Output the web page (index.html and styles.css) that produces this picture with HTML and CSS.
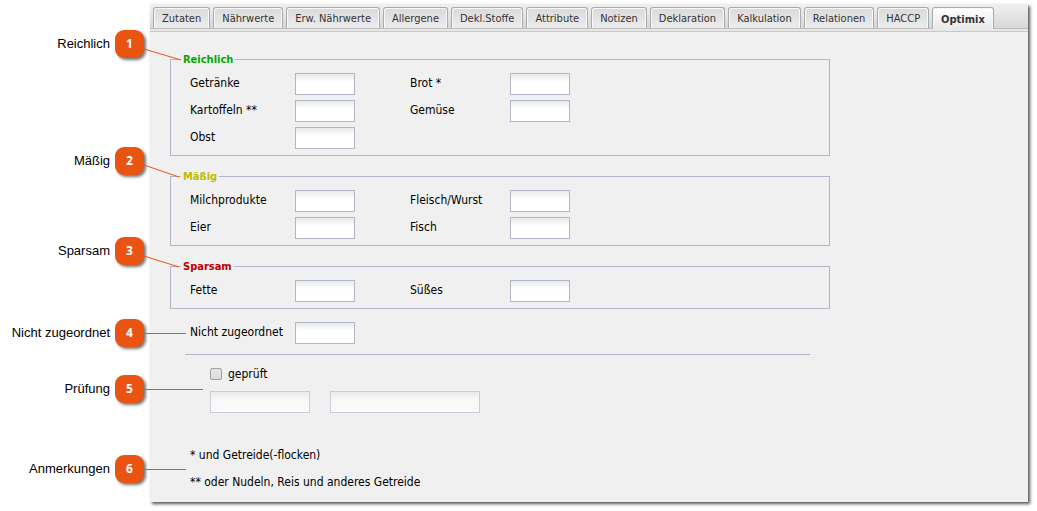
FILE: index.html
```html
<!DOCTYPE html>
<html lang="de">
<head>
<meta charset="utf-8">
<meta name="viewport" content="width=device-width, initial-scale=1">
<title>Optimix</title>
<link rel="stylesheet" href="styles.css">
</head>
<body>
<main class="panel">
  <nav class="tabs" role="tablist">
    <button class="tab" type="button" role="tab">Zutaten</button>
    <button class="tab" type="button" role="tab">Nährwerte</button>
    <button class="tab" type="button" role="tab">Erw. Nährwerte</button>
    <button class="tab" type="button" role="tab">Allergene</button>
    <button class="tab" type="button" role="tab">Dekl.Stoffe</button>
    <button class="tab" type="button" role="tab">Attribute</button>
    <button class="tab" type="button" role="tab">Notizen</button>
    <button class="tab" type="button" role="tab">Deklaration</button>
    <button class="tab" type="button" role="tab">Kalkulation</button>
    <button class="tab" type="button" role="tab">Relationen</button>
    <button class="tab" type="button" role="tab">HACCP</button>
    <button class="tab tab-active" type="button" role="tab" aria-selected="true">Optimix</button>
  </nav>
  <form class="form">
    <section class="section">
      <div class="callout callout-group"><span class="callout-text">Reichlich</span><span class="badge">1</span>
        <svg class="leader" width="60" height="40" aria-hidden="true"><path d="M0 19L37 30"/></svg></div>
      <fieldset class="group">
        <legend class="legend green">Reichlich</legend>
        <div class="fields">
          <label class="label" for="getraenke">Getränke</label><input class="field" id="getraenke" type="text">
          <label class="label" for="brot">Brot *</label><input class="field" id="brot" type="text">
          <label class="label" for="kartoffeln">Kartoffeln **</label><input class="field" id="kartoffeln" type="text">
          <label class="label" for="gemuese">Gemüse</label><input class="field" id="gemuese" type="text">
          <label class="label" for="obst">Obst</label><input class="field" id="obst" type="text">
        </div>
      </fieldset>
    </section>
    <section class="section">
      <div class="callout callout-group"><span class="callout-text">Mäßig</span><span class="badge">2</span>
        <svg class="leader" width="60" height="40" aria-hidden="true"><path d="M0 18L35 30"/></svg></div>
      <fieldset class="group">
        <legend class="legend yellow">Mäßig</legend>
        <div class="fields">
          <label class="label" for="milch">Milchprodukte</label><input class="field" id="milch" type="text">
          <label class="label" for="fleisch">Fleisch/Wurst</label><input class="field" id="fleisch" type="text">
          <label class="label" for="eier">Eier</label><input class="field" id="eier" type="text">
          <label class="label" for="fisch">Fisch</label><input class="field" id="fisch" type="text">
        </div>
      </fieldset>
    </section>
    <section class="section">
      <div class="callout callout-group"><span class="callout-text">Sparsam</span><span class="badge">3</span>
        <svg class="leader" width="60" height="40" aria-hidden="true"><path d="M0 19L35 30"/></svg></div>
      <fieldset class="group">
        <legend class="legend red">Sparsam</legend>
        <div class="fields">
          <label class="label" for="fette">Fette</label><input class="field" id="fette" type="text">
          <label class="label" for="suesses">Süßes</label><input class="field" id="suesses" type="text">
        </div>
      </fieldset>
    </section>
    <section class="section">
      <div class="callout"><span class="callout-text">Nicht zugeordnet</span><span class="badge">4</span>
        <svg class="leader" width="60" height="40" aria-hidden="true"><path d="M0 14.5H42"/></svg></div>
      <div class="fields unassigned">
        <label class="label" for="rest">Nicht zugeordnet</label><input class="field" id="rest" type="text">
      </div>
    </section>
    <hr class="rule">
    <section class="section">
      <div class="callout"><span class="callout-text">Prüfung</span><span class="badge">5</span>
        <svg class="leader" width="60" height="40" aria-hidden="true"><path d="M0 14.5H59"/></svg></div>
      <div class="check">
        <label class="check-label"><input class="checkbox" type="checkbox">geprüft</label>
        <div class="check-fields">
          <input class="field check-date" type="text" aria-label="Geprüft am" disabled>
          <input class="field check-user" type="text" aria-label="Geprüft von" disabled>
        </div>
      </div>
    </section>
    <section class="section notes">
      <div class="callout"><span class="callout-text">Anmerkungen</span><span class="badge">6</span>
        <svg class="leader" width="60" height="40" aria-hidden="true"><path d="M0 14.5H42"/></svg></div>
      <p class="note">* und Getreide(-flocken)</p>
      <p class="note">** oder Nudeln, Reis und anderes Getreide</p>
    </section>
  </form>
</main>
</body>
</html>
```

FILE: styles.css
```css
* {
  box-sizing: border-box;
}

body {
  margin: 0;
  background: #fff;
  color: #000;
  font: 12px/16px Tahoma, "DejaVu Sans Condensed", "Noto Sans", sans-serif;
}

.panel {
  margin: 4px 9px 9px 150px;
  padding-bottom: 12px;
  background: #f0f0f0;
  box-shadow: 2px 2px 3px 0 #555;
}

/* Tab strip */

.tabs {
  display: flex;
  align-items: flex-end;
  gap: 3px;
  height: 28px;
  padding: 3px 3px 0;
  border-bottom: 1px solid #c8c8c8;
  background: linear-gradient(#f0f0f0, #d8d8d8 24px, #bcbcbc 24px, #bcbcbc 25px, #e8e8e8 25px);
}

.tab {
  flex: none;
  height: 21px;
  margin-bottom: 3px;
  padding: 2px 8px 0;
  border: 1px solid #aaa;
  border-bottom: 0;
  border-radius: 3px 3px 0 0;
  background: linear-gradient(#dadada, #ececec);
  box-shadow: inset 1px 1px 0 #f8f8f8, inset -1px 0 0 #f8f8f8;
  color: #333;
  font: inherit;
  font-size: 11px;
  white-space: nowrap;
}

.tab-active {
  height: 22px;
  margin-bottom: 2px;
  background: linear-gradient(#fff, #e8e8e8);
  font-weight: bold;
}

/* Form */

.form {
  display: flex;
  flex-direction: column;
  padding-top: 20px;
}

.section {
  position: relative;
  margin-bottom: 13px;
  padding-left: 20px;
}

.group {
  max-width: 660px;
  margin: 0;
  padding: 6px 19px;
  border: 1px solid #b3b5c8;
}

.legend {
  margin-left: -9px;
  padding: 0 2px;
  font-size: 11px;
  line-height: 15px;
  font-weight: bold;
}

.green { color: #00a800; }
.yellow { color: #bdbd00; }
.red { color: #c00000; }

.fields {
  display: grid;
  grid-template-columns: 105px 115px 100px 60px;
  row-gap: 5px;
}

.label {
  line-height: 20px;
}

.field {
  width: 60px;
  height: 22px;
  margin: 0;
  padding: 0 3px;
  border: 1px solid #b3b5c8;
  background: linear-gradient(#e6eaea, #fff 8px);
  font: inherit;
}

.field:disabled {
  opacity: 0.6;
}

.unassigned {
  padding-left: 20px;
}

.section:has(.unassigned) {
  margin-bottom: 10px;
}

.rule {
  width: 625px;
  max-width: 100%;
  margin: 0 0 9px 35px;
  border: 0;
  border-top: 1px solid #b3b5c8;
}

.check {
  display: grid;
  gap: 7px;
  padding-left: 40px;
}

.check-label {
  display: flex;
  align-items: center;
  gap: 6px;
  line-height: 20px;
}

.checkbox {
  appearance: none;
  width: 12px;
  height: 12px;
  margin: 0;
  border: 1px solid #a0a0a0;
  border-radius: 2px;
  background: linear-gradient(#e8e8e8, #dcdcdc);
}

.checkbox:checked {
  background: #555;
}

.check-fields {
  display: flex;
  gap: 20px;
}

.check-date { width: 100px; }
.check-user { width: 150px; }

.notes {
  display: grid;
  gap: 11px;
  margin: 21px 0 0;
  padding-left: 40px;
}

.note {
  margin: 0;
}

/* Numbered callouts beside the panel */

.callout {
  position: absolute;
  top: calc(50% - 14px);
  right: calc(100% + 6px);
  display: flex;
  align-items: center;
  gap: 5px;
  color: #000;
  font: 13px/16px "Liberation Sans", Arial, sans-serif;
  white-space: nowrap;
}

.callout-group {
  top: -22px;
}

.badge {
  width: 29px;
  height: 28px;
  border-radius: 9px;
  background: #e95412;
  box-shadow: 2px 2px 3px #777;
  color: #fff;
  font: bold 12px/28px "Open Sans", "Noto Sans", sans-serif;
  text-align: center;
}

.leader {
  position: absolute;
  top: 0;
  left: 100%;
  fill: none;
  stroke: #e95412;
  pointer-events: none;
}
```
